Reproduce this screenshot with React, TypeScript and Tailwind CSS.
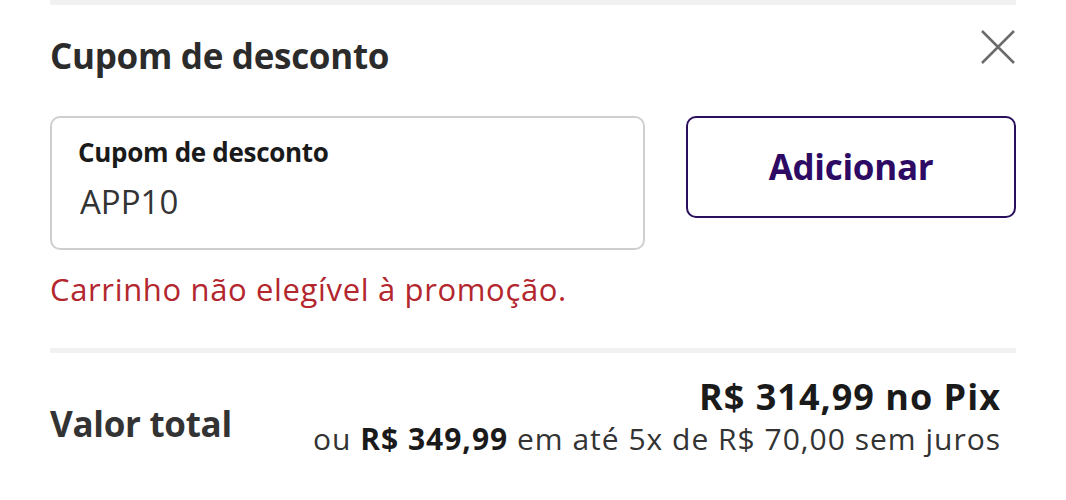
const font = { fontFamily: '"Open Sans", "Noto Sans", sans-serif' };

function CloseIcon() {
    return (
        <svg width="36" height="36" viewBox="0 0 36 36" fill="none" stroke="#6b6b6b" strokeWidth="2.5">
            <path d="M2 2 L34 34 M34 2 L2 34" />
        </svg>
    );
}

export default function App() {
    return (
        <div className="w-[1066px] h-[500px] bg-white overflow-hidden" style={font}>
            <div className="mx-[50px] w-[966px]">
                <div className="h-[5px] bg-[#f1f1f1]" />
                <div className="flex items-center justify-between mt-[28px] h-[46px]">
                    <h2 className="text-[35px] font-bold text-[#2b2b2b] tracking-[-0.3px]">Cupom de desconto</h2>
                    <button className="-mt-[18px]">
                        <CloseIcon />
                    </button>
                </div>
                <div className="flex gap-[41px] mt-[37px]">
                    <div className="w-[595px] h-[134px] border-2 border-[#cfcfcf] rounded-[10px] px-[26px] pt-[16px]">
                        <p className="text-[26px] font-bold text-[#1a1a1a] leading-[36px] tracking-[-0.3px]">Cupom de desconto</p>
                        <p className="text-[33px] text-[#333] leading-[44px] mt-[10px] ml-[2px]">APP10</p>
                    </div>
                    <button className="w-[330px] h-[102px] border-2 border-[#2a0f5c] rounded-[10px] text-[35px] font-bold text-[#2d0a63] tracking-[-0.3px]">
                        Adicionar
                    </button>
                </div>
                <p className="text-[31px] text-[#b3262e] mt-[18px] leading-[42px] tracking-[0.65px]">Carrinho não elegível à promoção.</p>
                <div className="h-[5px] bg-[#f1f1f1] mt-[38px]" />
                <div className="flex items-center justify-between mt-[22px] pr-[15px]">
                    <p className="text-[35px] font-bold text-[#333] mt-[14px] tracking-[-0.3px]">Valor total</p>
                    <div className="text-right">
                        <p className="text-[36px] font-bold text-[#1a1a1a] leading-[44px] tracking-[1px]">R$ 314,99 no Pix</p>
                        <p className="text-[30px] text-[#333] leading-[40px] tracking-[1px]">
                            ou <span className="font-bold text-[#1a1a1a]">R$ 349,99</span> em até 5x de R$ 70,00 sem juros
                        </p>
                    </div>
                </div>
            </div>
        </div>
    );
}
